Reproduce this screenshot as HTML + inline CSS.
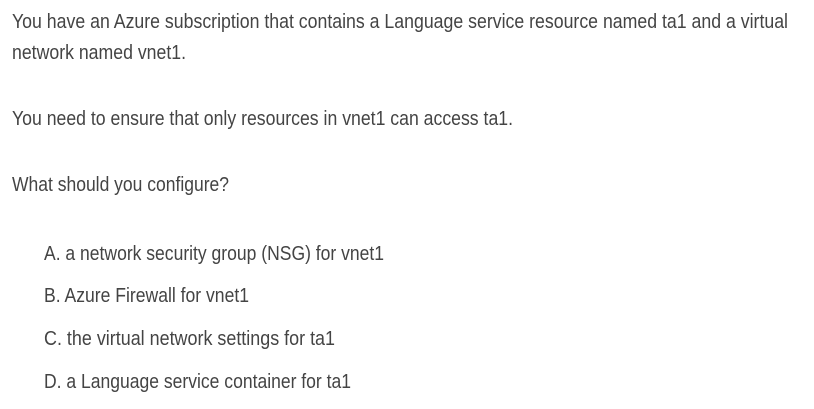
<!DOCTYPE html>
<html><head><meta charset="utf-8"><style>
html,body{margin:0;padding:0;background:#fff;width:814px;height:409px;overflow:hidden}
svg text{font-family:"Liberation Sans",sans-serif;font-size:20px;fill:#444}
</style></head><body>
<svg width="814" height="409" xmlns="http://www.w3.org/2000/svg">
<text x="12" y="28" textLength="776" lengthAdjust="spacingAndGlyphs">You have an Azure subscription that contains a Language service resource named ta1 and a virtual</text>
<text x="12" y="59" textLength="174" lengthAdjust="spacingAndGlyphs">network named vnet1.</text>
<text x="12" y="125" textLength="501" lengthAdjust="spacingAndGlyphs">You need to ensure that only resources in vnet1 can access ta1.</text>
<text x="12" y="191" textLength="217" lengthAdjust="spacingAndGlyphs">What should you configure?</text>
<text x="44" y="260" textLength="340" lengthAdjust="spacingAndGlyphs">A. a network security group (NSG) for vnet1</text>
<text x="44" y="302" textLength="205" lengthAdjust="spacingAndGlyphs">B. Azure Firewall for vnet1</text>
<text x="44" y="345" textLength="291" lengthAdjust="spacingAndGlyphs">C. the virtual network settings for ta1</text>
<text x="44" y="388" textLength="307" lengthAdjust="spacingAndGlyphs">D. a Language service container for ta1</text>
</svg>
</body></html>
